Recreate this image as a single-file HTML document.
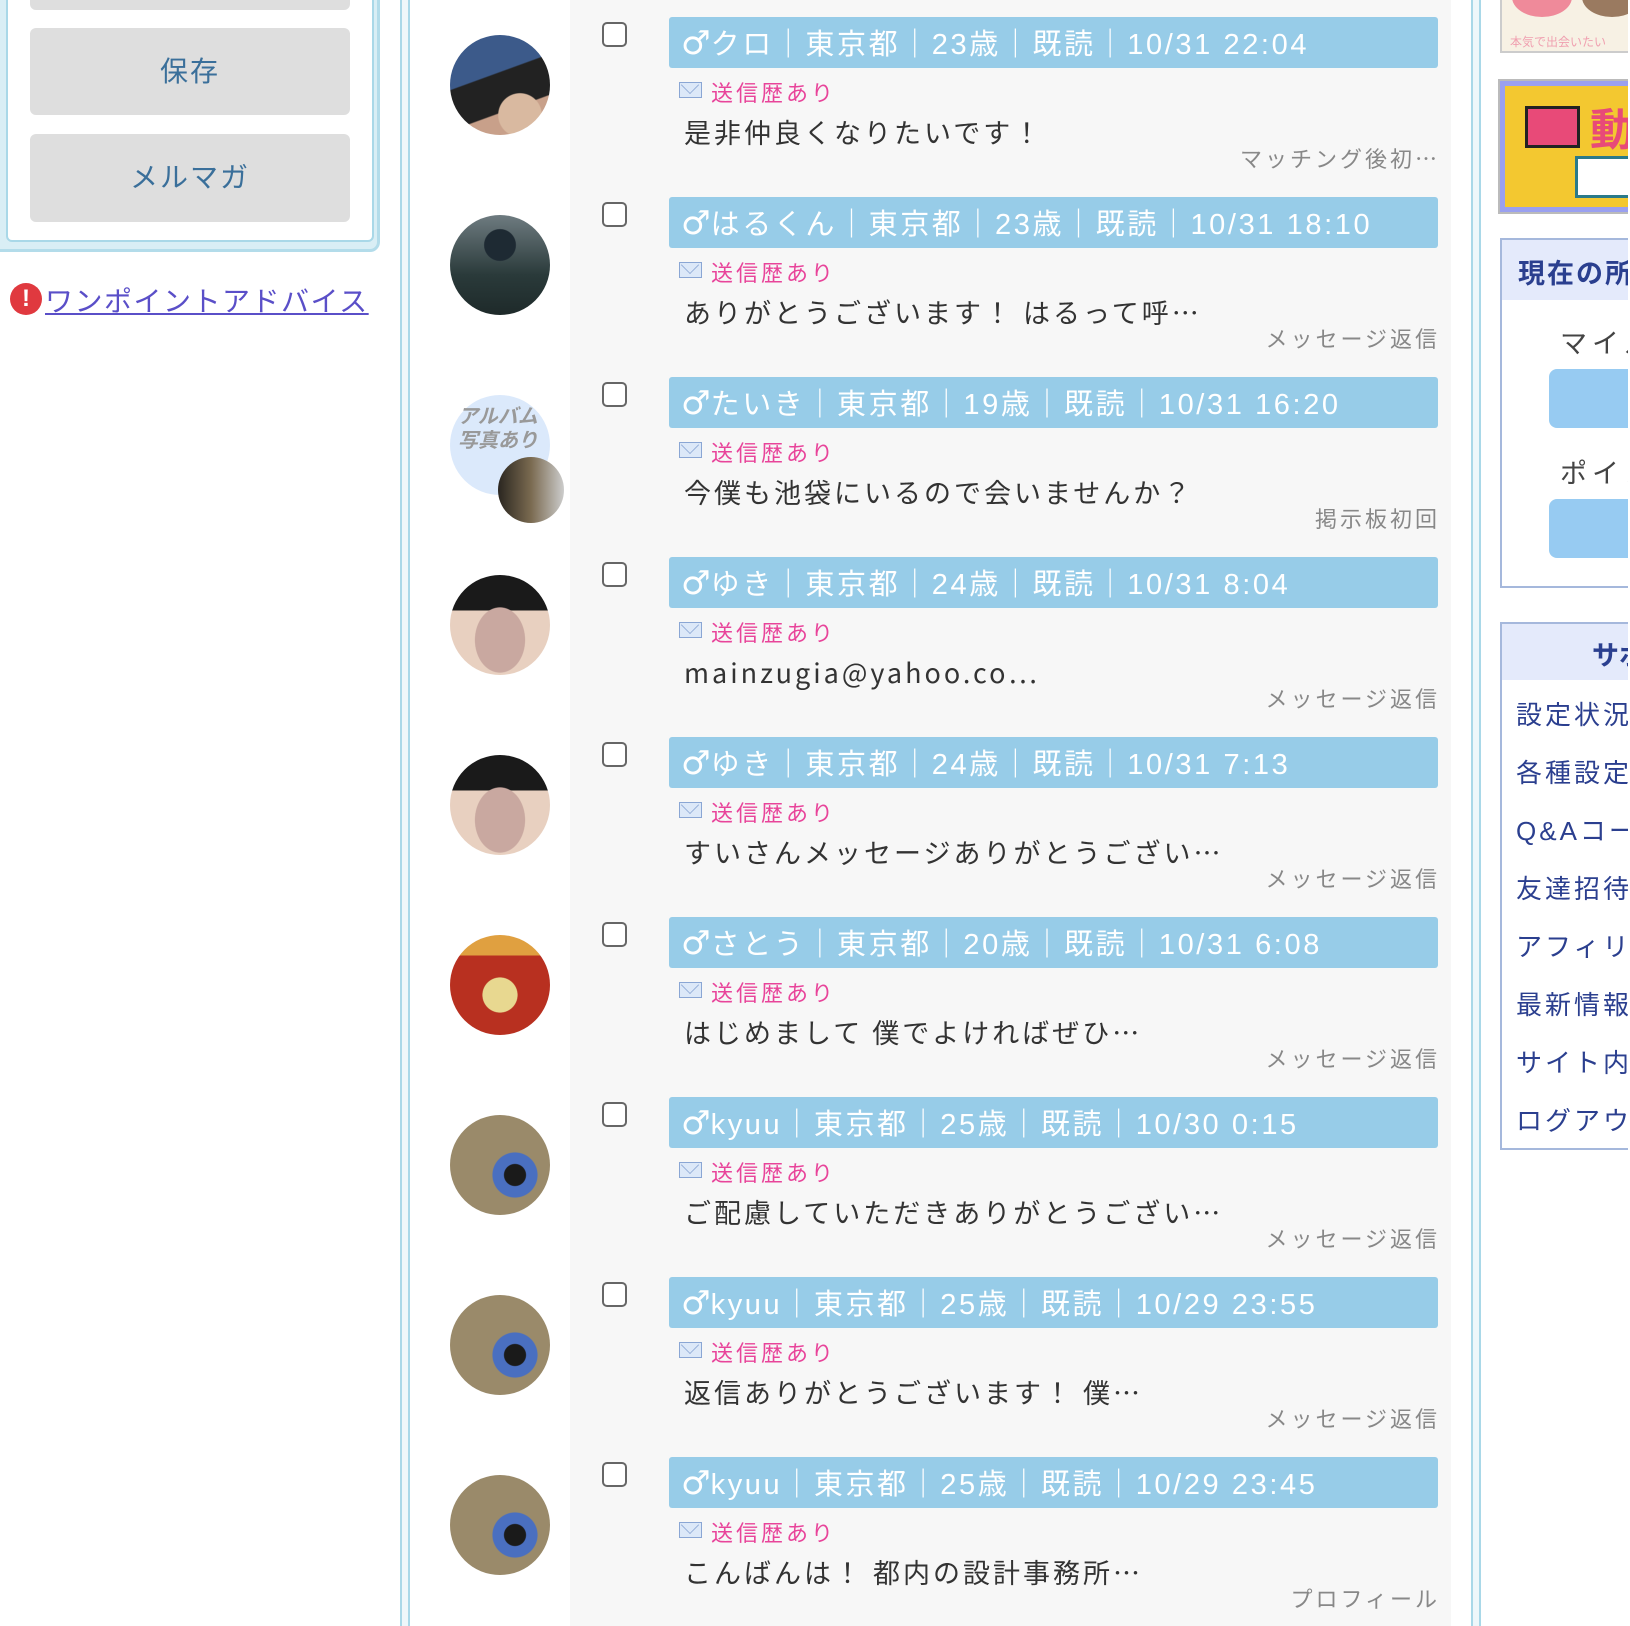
<!DOCTYPE html>
<html><head><meta charset="utf-8"><style>
*{margin:0;padding:0;box-sizing:border-box}
body{width:1630px;height:1626px;overflow:hidden;background:#fff;position:relative;font-family:"Liberation Sans","Noto Sans CJK JP",sans-serif;color:#333}
.a{position:absolute}
.btn{position:absolute;left:30px;width:320px;background:#dedede;border-radius:6px;color:#3a6f9a;font-size:28px;text-align:center;letter-spacing:2px}
.hdr{position:absolute;left:669px;width:769px;height:51px;background:#97cce8;border-radius:3px;color:#fff;font-size:29px;line-height:51px;padding-left:12px;letter-spacing:2.6px;white-space:nowrap}
.hdr b{font-weight:normal;font-size:33px;font-family:"DejaVu Sans",sans-serif;letter-spacing:0}
.cb{position:absolute;left:602px;width:25px;height:25px;border:2px solid #666;border-radius:5px;background:#fff}
.sent{position:absolute;left:711px;color:#e8449a;font-size:22px;letter-spacing:3px}
.mail{position:absolute;left:679px;width:23px;height:16px;border:1.5px solid #8aa6d4;background:#dce8f8}
.mail:before{content:"";position:absolute;left:2px;top:-6px;width:15px;height:15px;border-right:1.5px solid #8aa6d4;border-bottom:1.5px solid #8aa6d4;transform:rotate(45deg) scale(.8,.8)}
.msg{position:absolute;left:684px;font-size:27px;letter-spacing:3px;white-space:nowrap;font-family:"Noto Sans CJK JP",sans-serif;line-height:1.2}
.msg.l{font-family:"Liberation Sans","Noto Sans CJK JP",sans-serif}
.lab{position:absolute;right:190px;color:#888;font-size:22px;letter-spacing:3px;font-family:"Noto Sans CJK JP",sans-serif;line-height:1.2}
.av{position:absolute;left:450px;width:100px;height:100px;border-radius:50%}
.lk{position:absolute;left:1516px;color:#2b3f8f;font-size:26px;letter-spacing:3px;white-space:nowrap}
</style></head><body>
<div class="a" style="left:-10px;top:-10px;width:390px;height:262px;border:3px solid #b3dcea;border-radius:10px;background:#d9eef5"></div>
<div class="a" style="left:6px;top:-10px;width:368px;height:252px;border:2px solid #a9d8e8;border-radius:6px;background:#fff"></div>
<div class="btn" style="top:-20px;height:30px"></div>
<div class="btn" style="top:28px;height:87px;line-height:87px">保存</div>
<div class="btn" style="top:134px;height:88px;line-height:88px">メルマガ</div>
<div class="a" style="left:10px;top:283px;width:32px;height:32px;border-radius:50%;background:#e0393f;color:#fff;font-weight:bold;font-size:24px;text-align:center;line-height:32px">!</div>
<div class="a" style="left:45px;top:280px;font-size:28px;color:#5a4fc8;text-decoration:underline;letter-spacing:1.5px">ワンポイントアドバイス</div>
<div class="a" style="left:400px;top:0;width:10px;height:1626px;border-left:2px solid #a9d8e8;border-right:2px solid #a9d8e8;background:#eef7fa"></div>
<div class="a" style="left:1471px;top:0;width:10px;height:1626px;border-left:2px solid #a9d8e8;border-right:2px solid #a9d8e8;background:#eef7fa"></div>
<div class="a" style="left:570px;top:0;width:881px;height:1626px;background:#f7f7f7"></div>

<div class="av" style="top:35px;background:radial-gradient(circle at 70% 80%,#d9b9a0 0 20%,transparent 21%),linear-gradient(160deg,#3c5a8a 0 40%,#222 41% 70%,#c8a08a 71%)"></div>
<div class="cb" style="top:22px"></div><div class="hdr" style="top:17px"><b>♂</b>クロ｜東京都｜23歳｜既読｜10/31 22:04</div>
<div class="mail" style="top:82px"></div><div class="sent" style="top:76px">送信歴あり</div>
<div class="msg" style="top:116px">是非仲良くなりたいです！</div><div class="lab" style="top:145px">マッチング後初…</div>

<div class="av" style="top:215px;background:radial-gradient(circle at 50% 30%,#1e2a33 0 18%,transparent 19%),linear-gradient(180deg,#6e7b80,#2a3a3a 60%,#1e2a2a)"></div>
<div class="cb" style="top:202px"></div><div class="hdr" style="top:197px"><b>♂</b>はるくん｜東京都｜23歳｜既読｜10/31 18:10</div>
<div class="mail" style="top:262px"></div><div class="sent" style="top:256px">送信歴あり</div>
<div class="msg" style="top:296px">ありがとうございます！ はるって呼…</div><div class="lab" style="top:325px">メッセージ返信</div>

<div class="av" style="top:395px;background:#dbe9fb"></div>
<div class="a" style="left:458px;top:405px;font-size:20px;font-style:italic;font-weight:bold;color:#999;line-height:24px">アルバム<br>写真あり</div>
<div class="a" style="left:498px;top:457px;width:66px;height:66px;border-radius:50%;background:linear-gradient(90deg,#2a2620,#7a6a50 50%,#ccc)"></div>
<div class="cb" style="top:382px"></div><div class="hdr" style="top:377px"><b>♂</b>たいき｜東京都｜19歳｜既読｜10/31 16:20</div>
<div class="mail" style="top:442px"></div><div class="sent" style="top:436px">送信歴あり</div>
<div class="msg" style="top:476px">今僕も池袋にいるので会いませんか？</div><div class="lab" style="top:505px">掲示板初回</div>

<div class="av" style="top:575px;background:radial-gradient(ellipse at 50% 65%,#c9a8a0 0 35%,transparent 36%),linear-gradient(180deg,#1a1a1a 0 35%,#e8d0c0 36%)"></div>
<div class="cb" style="top:562px"></div><div class="hdr" style="top:557px"><b>♂</b>ゆき｜東京都｜24歳｜既読｜10/31 8:04</div>
<div class="mail" style="top:622px"></div><div class="sent" style="top:616px">送信歴あり</div>
<div class="msg" style="top:656px">mainzugia@yahoo.co…</div><div class="lab" style="top:685px">メッセージ返信</div>

<div class="av" style="top:755px;background:radial-gradient(ellipse at 50% 65%,#c9a8a0 0 35%,transparent 36%),linear-gradient(180deg,#1a1a1a 0 35%,#e8d0c0 36%)"></div>
<div class="cb" style="top:742px"></div><div class="hdr" style="top:737px"><b>♂</b>ゆき｜東京都｜24歳｜既読｜10/31 7:13</div>
<div class="mail" style="top:802px"></div><div class="sent" style="top:796px">送信歴あり</div>
<div class="msg" style="top:836px">すいさんメッセージありがとうござい…</div><div class="lab" style="top:865px">メッセージ返信</div>

<div class="av" style="top:935px;background:radial-gradient(circle at 50% 60%,#e8d890 0 22%,transparent 23%),linear-gradient(180deg,#e0a040 0 20%,#b83020 21%)"></div>
<div class="cb" style="top:922px"></div><div class="hdr" style="top:917px"><b>♂</b>さとう｜東京都｜20歳｜既読｜10/31 6:08</div>
<div class="mail" style="top:982px"></div><div class="sent" style="top:976px">送信歴あり</div>
<div class="msg" style="top:1016px">はじめまして 僕でよければぜひ…</div><div class="lab" style="top:1045px">メッセージ返信</div>

<div class="av" style="top:1115px;background:radial-gradient(circle at 65% 60%,#1a1a1a 0 12%,#4a6fc0 13% 25%,transparent 26%),#9a8a6a"></div>
<div class="cb" style="top:1102px"></div><div class="hdr" style="top:1097px"><b>♂</b>kyuu｜東京都｜25歳｜既読｜10/30 0:15</div>
<div class="mail" style="top:1162px"></div><div class="sent" style="top:1156px">送信歴あり</div>
<div class="msg" style="top:1196px">ご配慮していただきありがとうござい…</div><div class="lab" style="top:1225px">メッセージ返信</div>

<div class="av" style="top:1295px;background:radial-gradient(circle at 65% 60%,#1a1a1a 0 12%,#4a6fc0 13% 25%,transparent 26%),#9a8a6a"></div>
<div class="cb" style="top:1282px"></div><div class="hdr" style="top:1277px"><b>♂</b>kyuu｜東京都｜25歳｜既読｜10/29 23:55</div>
<div class="mail" style="top:1342px"></div><div class="sent" style="top:1336px">送信歴あり</div>
<div class="msg" style="top:1376px">返信ありがとうございます！ 僕…</div><div class="lab" style="top:1405px">メッセージ返信</div>

<div class="av" style="top:1475px;background:radial-gradient(circle at 65% 60%,#1a1a1a 0 12%,#4a6fc0 13% 25%,transparent 26%),#9a8a6a"></div>
<div class="cb" style="top:1462px"></div><div class="hdr" style="top:1457px"><b>♂</b>kyuu｜東京都｜25歳｜既読｜10/29 23:45</div>
<div class="mail" style="top:1522px"></div><div class="sent" style="top:1516px">送信歴あり</div>
<div class="msg" style="top:1556px">こんばんは！ 都内の設計事務所…</div><div class="lab" style="top:1585px">プロフィール</div>

<div class="a" style="left:1500px;top:-5px;width:140px;height:58px;background:#f7f1e4;border:2px solid #ccc;overflow:hidden">
<div class="a" style="left:10px;top:-20px;width:60px;height:40px;border-radius:50%;background:#ef8a9a"></div>
<div class="a" style="left:80px;top:-20px;width:60px;height:40px;border-radius:50%;background:#9a7a60"></div>
<div class="a" style="left:8px;top:36px;font-size:12px;color:#f0a0b0;white-space:nowrap">本気で出会いたい</div></div>
<div class="a" style="left:1500px;top:81px;width:140px;height:131px;background:#f3c830;border:5px solid #9aa0f0;outline:2px solid #bbb;overflow:hidden">
<div class="a" style="left:20px;top:20px;width:55px;height:42px;background:#e84a78;border:3px solid #222"></div>
<div class="a" style="left:85px;top:8px;font-size:44px;font-weight:bold;color:#e84a78">動</div>
<div class="a" style="left:70px;top:70px;width:60px;height:42px;background:#fff;border:3px solid #2a7a8a"></div></div>

<div class="a" style="left:1500px;top:238px;width:140px;height:350px;border:2px solid #a5b8dc;background:#fff"></div>
<div class="a" style="left:1502px;top:240px;width:138px;height:60px;background:#e4eafb"></div>
<div class="a" style="left:1518px;top:252px;font-size:27px;font-weight:bold;color:#2a3f8f;letter-spacing:2px;white-space:nowrap">現在の所</div>
<div class="a" style="left:1560px;top:322px;font-size:27px;color:#444;letter-spacing:5px;white-space:nowrap">マイル</div>
<div class="a" style="left:1549px;top:369px;width:100px;height:59px;background:#97cbf2;border-radius:8px"></div>
<div class="a" style="left:1560px;top:452px;font-size:27px;color:#444;letter-spacing:5px;white-space:nowrap">ポイン</div>
<div class="a" style="left:1549px;top:499px;width:100px;height:59px;background:#97cbf2;border-radius:8px"></div>

<div class="a" style="left:1500px;top:622px;width:140px;height:528px;border:2px solid #a5b8dc;background:#fff"></div>
<div class="a" style="left:1502px;top:624px;width:138px;height:56px;background:#e4eafb"></div>
<div class="a" style="left:1592px;top:634px;font-size:27px;font-weight:bold;color:#2a3f8f;white-space:nowrap">サポ</div>
<div class="lk" style="top:695px">設定状況確</div>
<div class="lk" style="top:753px">各種設定</div>
<div class="lk" style="top:811px">Q&amp;Aコーナ</div>
<div class="lk" style="top:869px">友達招待</div>
<div class="lk" style="top:927px">アフィリエ</div>
<div class="lk" style="top:985px">最新情報</div>
<div class="lk" style="top:1043px">サイト内案</div>
<div class="lk" style="top:1101px">ログアウト</div>
<div class="a" style="left:1628px;top:0;width:2px;height:1626px;background:#fff"></div>
</body></html>
